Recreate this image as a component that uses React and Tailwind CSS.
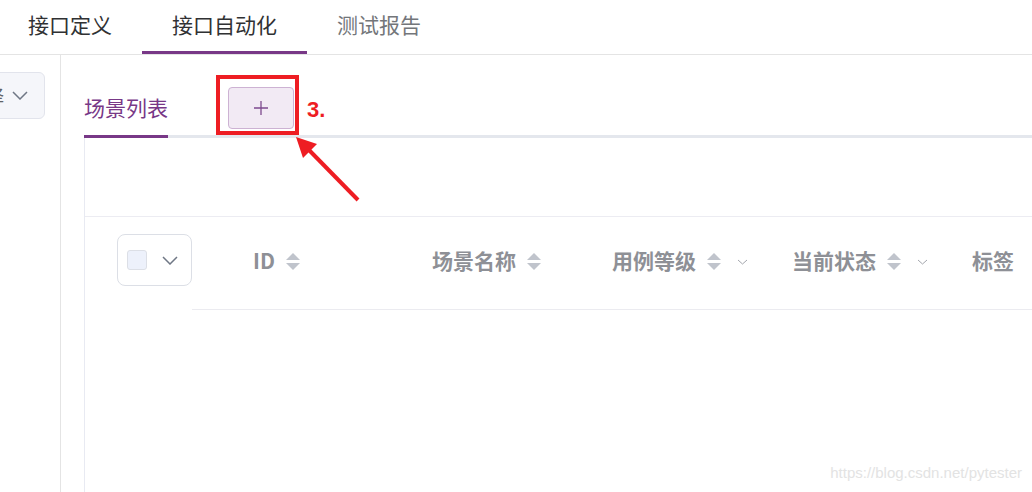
import React from "react";

const cjk = { fontFamily: '"Noto Sans CJK SC", "Noto Sans", sans-serif' };

const SortIcon = () => (
  <svg width="14" height="18" viewBox="0 0 14 18" className="shrink-0">
    <path d="M7 0 L14 7 L0 7 Z" fill="#c0c4cc" />
    <path d="M0 10 L14 10 L7 17 Z" fill="#c0c4cc" />
  </svg>
);

const Chevron = ({ w = 16, h = 9, color = "#6f7785", sw = 1.5 }) => (
  <svg width={w} height={h} viewBox={`0 0 ${w} ${h}`} className="shrink-0">
    <path d={`M1 1 L${w / 2} ${h - 1} L${w - 1} 1`} fill="none" stroke={color} strokeWidth={sw} />
  </svg>
);

const HeaderCell = ({ label, sort, filter, w = "w-[180px]" }) => (
  <div className={`${w} shrink-0 flex items-center`}>
    <span className="text-[21px] font-bold text-[#8e9096] leading-none">{label}</span>
    {sort && (
      <span className="ml-[11px] flex mt-[2px]">
        <SortIcon />
      </span>
    )}
    {filter && (
      <span className="ml-[16px] flex mt-[2px]">
        <Chevron w={11} h={6} color="#a3a6ad" sw={1} />
      </span>
    )}
  </div>
);

export default function App() {
  const tabs = [
    { label: "接口定义", cls: "pl-[28px] pr-[30px] text-[#303133] border-transparent" },
    { label: "接口自动化", cls: "px-[30px] text-[#303133] border-[#783887]" },
    { label: "测试报告", cls: "px-[30px] text-[#73767a] border-transparent" },
  ];

  return (
    <div className="relative w-[1032px] h-[492px] bg-white overflow-hidden flex flex-col" style={cjk}>
      {/* top tabs */}
      <div className="h-[55px] shrink-0 flex border-b border-[#e4e4e4]">
        {tabs.map((t) => (
          <div
            key={t.label}
            className={`h-[54px] flex items-center pb-[2px] border-b-[3px] text-[21px] leading-none ${t.cls}`}
          >
            {t.label}
          </div>
        ))}
      </div>

      <div className="flex-1 flex min-h-0">
        {/* sidebar */}
        <div className="w-[61px] shrink-0 border-r border-[#e4e4e4] overflow-hidden pt-[17px]">
          <div className="-ml-[40px] w-[85px] h-[47px] rounded-[6px] border border-[#e2e4ec] bg-[#f5f6fa] flex items-center justify-end pr-[16px] gap-[8px]">
            <span className="text-[19px] text-[#606266] leading-none">择</span>
            <Chevron />
          </div>
        </div>

        {/* main */}
        <div className="flex-1 min-w-0 flex flex-col pl-[23px] pt-[32px]">
          <div className="h-[51px] shrink-0 flex items-start border-b-[3px] border-[#e4e7ed]">
            <div className="h-[51px] border-b-[3px] border-[#783887] flex items-center pb-[8px] text-[21px] leading-none text-[#783887]">
              场景列表
            </div>
            <button className="ml-[60px] w-[66px] h-[42px] rounded-[4px] border border-[#cdb2d3] bg-[#f2eaf4] flex items-center justify-center">
              <svg width="16" height="16" viewBox="0 0 16 16">
                <path d="M8 1 V15 M1 8 H15" stroke="#7d4a8e" strokeWidth="1.3" />
              </svg>
            </button>
          </div>

          <div className="flex-1 border-l border-[#e8eaf2] flex flex-col">
            <div className="h-[79px] shrink-0 border-b border-[#ececf2]" />
            <div className="flex">
              <div className="w-[107px] shrink-0 pl-[32px] pt-[17px]">
                <div className="w-[75px] h-[52px] rounded-[8px] border border-[#dcdfe6] flex items-center pl-[9px]">
                  <div className="w-[20px] h-[20px] rounded-[3px] border border-[#dcdfe6] bg-[#edf1fb]" />
                  <span className="ml-[15px] flex">
                    <Chevron />
                  </span>
                </div>
              </div>
              <div className="flex-1 h-[93px] border-b border-[#ebebf0] flex items-center pl-[61px] pb-[5px]">
                <HeaderCell label="ID" sort w="w-[179px]" />
                <HeaderCell label="场景名称" sort />
                <HeaderCell label="用例等级" sort filter />
                <HeaderCell label="当前状态" sort filter />
                <HeaderCell label="标签" />
              </div>
            </div>
          </div>
        </div>
      </div>

      {/* annotation overlay */}
      <div className="absolute left-[216px] top-[75px] w-[83px] h-[60px] border-[4px] border-[#ee1d23]" />
      <div
        className="absolute left-[307px] top-[99px] text-[22px] font-bold leading-none text-[#ee1d23]"
        style={{ fontFamily: '"Liberation Sans", Arial, sans-serif' }}
      >
        3.
      </div>
      <svg className="absolute left-0 top-0" width="1032" height="492">
        <line x1="308" y1="149" x2="358" y2="200" stroke="#ee1d23" strokeWidth="4" />
        <polygon points="296,137 303,158 317,144" fill="#ee1d23" />
      </svg>

      <div
        className="absolute right-[10px] bottom-[12px] text-[15px] leading-none text-[#e3e3e3]"
        style={{ fontFamily: '"Liberation Sans", Arial, sans-serif' }}
      >
        https://blog.csdn.net/pytester
      </div>
    </div>
  );
}
